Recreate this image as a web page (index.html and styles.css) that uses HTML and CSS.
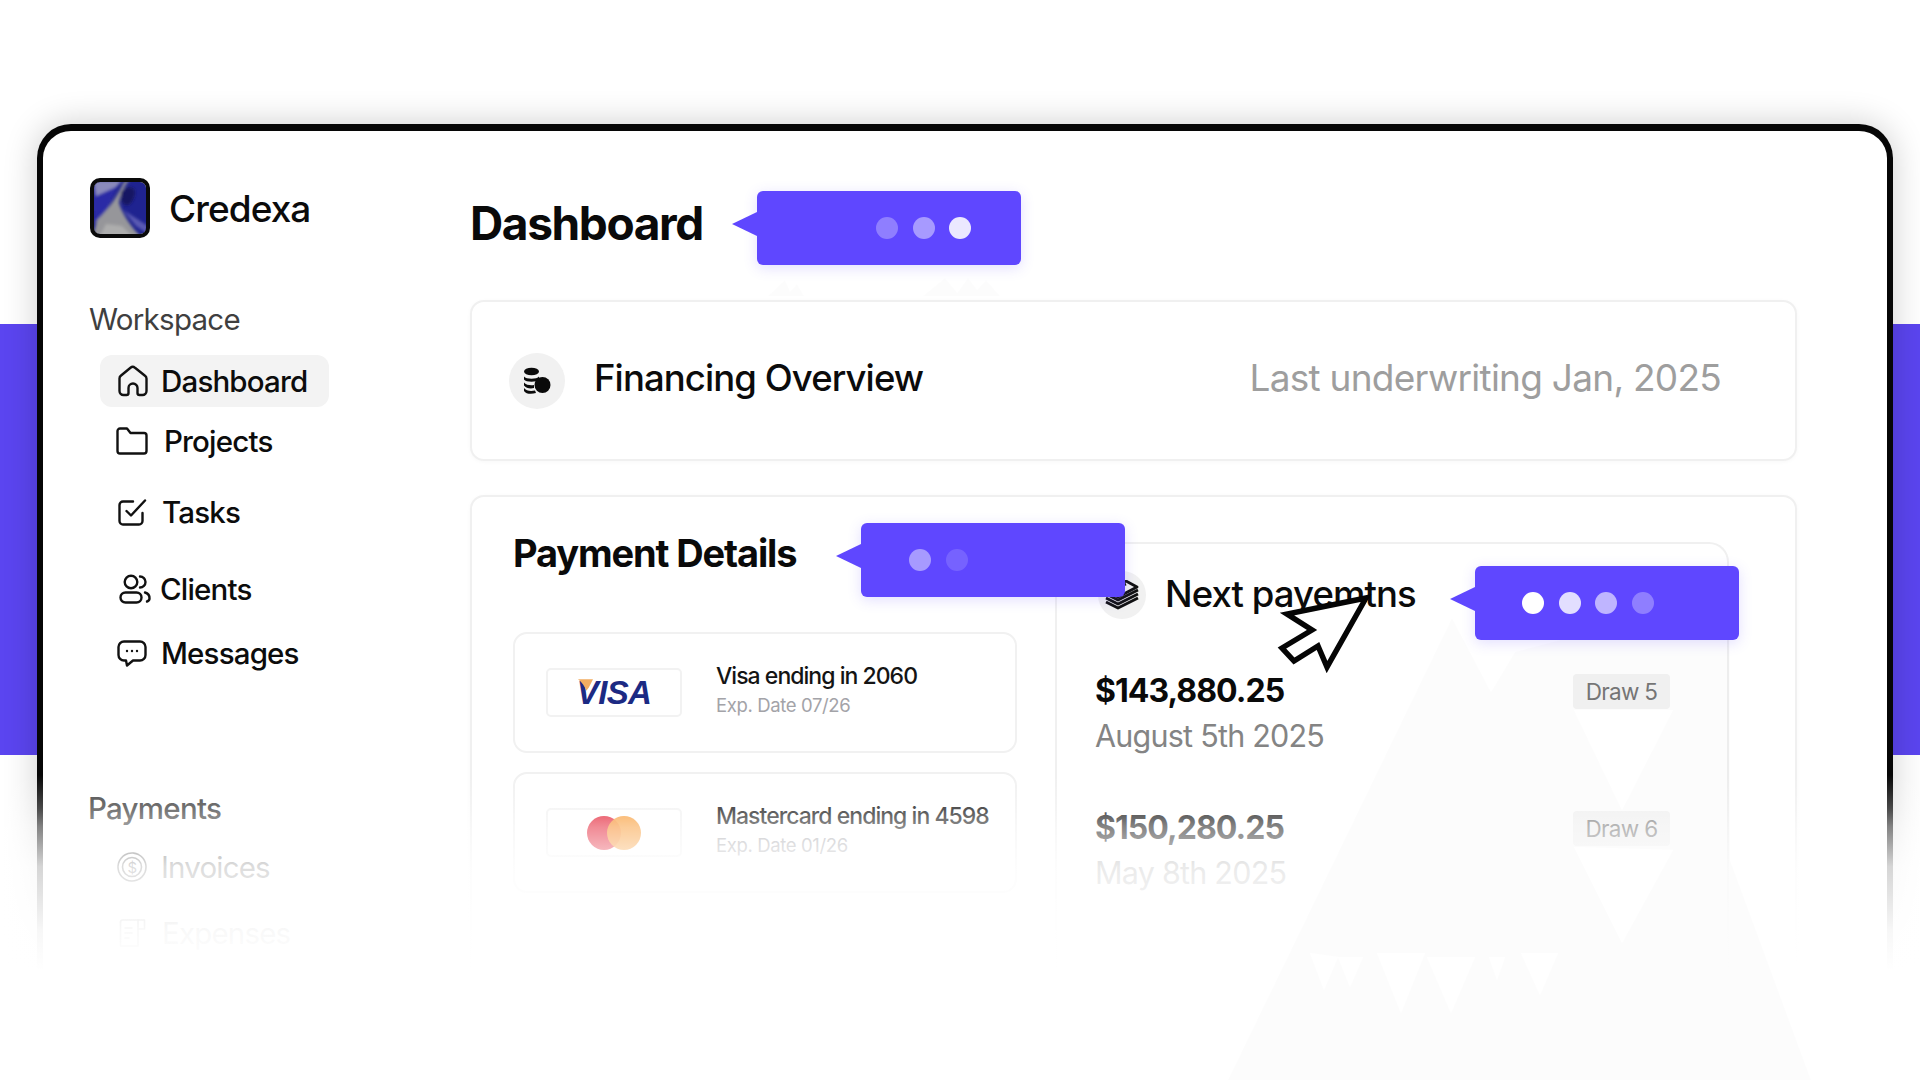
FILE: index.html
```html
<!DOCTYPE html>
<html lang="en">
<head>
<meta charset="utf-8">
<title>Credexa</title>
<link rel="stylesheet" href="styles.css">
</head>
<body>
<div class="stage">
  <div class="band"></div>
  <div class="window">
    <aside class="sidebar">
      <div class="brand">
        <svg class="logo" viewBox="0 0 60 60">
          <defs>
            <clipPath id="lc"><rect x="4" y="4" width="52" height="52" rx="6"/></clipPath>
            <filter id="lb"><feGaussianBlur stdDeviation="1.5"/></filter>
          </defs>
          <g clip-path="url(#lc)">
            <rect width="60" height="60" fill="#1f2390"/>
            <g filter="url(#lb)">
              <path d="M2 2H30L24 16 17 32 4 46Z" fill="#2a2aa6"/>
              <path d="M4 3H32L26 9 6 18Z" fill="#8a8abc"/>
              <path d="M34 4C28 16 22 28 7 42L2 62H54C42 50 33 38 29 25 30 16 34 8 40 2Z" fill="#96969a"/>
              <path d="M8 62L16 46 32 48 46 62Z" fill="#adadad"/>
              <path d="M31 14C38 6 50 8 43 22 39 30 33 28 31 22Z" fill="#141663"/>
              <path d="M33 32L58 48V56L46 48Z" fill="#5a5ab2"/>
            </g>
          </g>
          <rect x="2" y="2" width="56" height="56" rx="8" fill="none" stroke="#0a0a0a" stroke-width="4"/>
        </svg>
        <span class="brand-name">Credexa</span>
      </div>

      <div class="group-label workspace">Workspace</div>
      <a class="nav-item active">
        <svg class="ico i-home" viewBox="0 0 32 32"><path d="M9 30H6.500A4 4 0 0 1 2.500 26V13.500A3.500 3.500 0 0 1 3.800 10.800L13.500 2.800A3.500 3.500 0 0 1 18 2.800L28 10.800A3.500 3.500 0 0 1 29.500 13.500V26A4 4 0 0 1 25.500 30H22.500A2 2 0 0 1 20.500 28V23A4.500 4.500 0 0 0 11.500 23V28A2 2 0 0 1 9.500 30Z"/></svg>
        <span>Dashboard</span>
      </a>
      <a class="nav-item projects">
        <svg class="ico i-folder" viewBox="0 0 32 28"><path d="M1.500 4A2.500 2.500 0 0 1 4 1.500H11L14.500 6H28A2.500 2.500 0 0 1 30.500 8.500V24A2.500 2.500 0 0 1 28 26.500H4A2.500 2.500 0 0 1 1.500 24Z"/></svg>
        <span>Projects</span>
      </a>
      <a class="nav-item tasks">
        <svg class="ico i-task" viewBox="0 0 29 27"><path d="M15 2.500H5A3.500 3.500 0 0 0 1.500 6V22A3.500 3.500 0 0 0 5 25.500H21A3.500 3.500 0 0 0 24.500 22V14"/><path d="M8.500 12L13 16.500 27 1.500"/></svg>
        <span>Tasks</span>
      </a>
      <a class="nav-item clients">
        <svg class="ico i-users" viewBox="0 0 32 30"><circle cx="12" cy="8" r="6.300"/><rect x="1.500" y="18.500" width="21" height="10" rx="5"/><path d="M21 2.500A5.500 5.500 0 0 1 21 13.500"/><path d="M26 18.500A6 6 0 0 1 30.500 24.500C30.500 26 29.500 27 28 27.500"/></svg>
        <span>Clients</span>
      </a>
      <a class="nav-item messages">
        <svg class="ico i-chat" viewBox="0 0 30 27"><path d="M7 1.500H23A5.500 5.500 0 0 1 28.500 7V15A5.500 5.500 0 0 1 23 20.500H16L10 25.500 9 20.500H7A5.500 5.500 0 0 1 1.500 15V7A5.500 5.500 0 0 1 7 1.500Z"/><circle class="dot-fill" cx="10" cy="11" r="1.200"/><circle class="dot-fill" cx="15" cy="11" r="1.200"/><circle class="dot-fill" cx="20" cy="11" r="1.200"/></svg>
        <span>Messages</span>
      </a>

      <div class="group-label payments">Payments</div>
      <a class="nav-item invoices">
        <svg class="ico i-coin" viewBox="0 0 30 30"><circle cx="15" cy="15" r="14" stroke-dasharray="5 .6"/><circle cx="15" cy="15" r="9.500"/><text x="15" y="20.500" class="coin-sign">$</text></svg>
        <span>Invoices</span>
      </a>
      <a class="nav-item expenses">
        <svg class="ico i-receipt" viewBox="0 0 27 28"><path d="M1.500 3A2 2 0 0 1 3.500 1H25.500V10H19"/><path d="M1.500 3V27H19V1"/><path d="M6 9H13M6 14H13M6 19H10"/></svg>
        <span>Expenses</span>
      </a>
    </aside>

    <main class="main">
      <h1 class="page-title">Dashboard</h1>

      <section class="card overview">
        <span class="circle large">
          <svg class="coins" viewBox="0 0 28 28"><ellipse cx="8.500" cy="4.500" rx="7.500" ry="3.800"/><path d="M1 9.500C3 12.500 14 12.500 16 9.500V12.500C14 15.500 3 15.500 1 12.500Z"/><path d="M1 15.500C3 18.500 9 18.500 11 18V21C7 22 3 21 1 18.500Z"/><path d="M1 21C3 24 8 24.500 12 23.500L13 26C8 27.500 3 27 1 24Z"/><circle cx="19.500" cy="18" r="8"/></svg>
        </span>
        <h2 class="section-title lifted">Financing Overview</h2>
        <span class="underwriting">Last underwriting Jan, 2025</span>
      </section>

      <section class="card details">
        <div class="pay-col">
          <h2 class="pay-title">Payment Details</h2>
          <div class="pay-card visa">
            <div class="pay-logo">
              <span class="visa-mark"><svg class="visa-tick" viewBox="0 0 18 14"><path d="M0 0H18L13 10 10 14C8 8 5 4 0 0Z"/></svg>VISA</span>
            </div>
            <div class="pay-text">
              <div class="pay-name">Visa ending in 2060</div>
              <div class="pay-exp">Exp. Date 07/26</div>
            </div>
          </div>
          <div class="pay-card master">
            <div class="pay-logo">
              <span class="mc"><i class="mc-a"></i><i class="mc-b"></i></span>
            </div>
            <div class="pay-text">
              <div class="pay-name">Mastercard ending in 4598</div>
              <div class="pay-exp">Exp. Date 01/26</div>
            </div>
          </div>
        </div>

        <div class="next-panel">
          <div class="next-head">
            <span class="circle small">
              <svg class="cash" viewBox="0 0 36 30"><path d="M3 10L22 1 33 7 14 17Z"/><path d="M10 9L22 4M2 14L14 20 34 10M2 18L14 24 34 14M2 22L14 28 34 18"/></svg>
            </span>
            <h2 class="section-title">Next payemtns</h2>
          </div>
          <div class="draw first">
            <div>
              <div class="amount">$143,880.25</div>
              <div class="date">August 5th 2025</div>
            </div>
            <span class="badge">Draw 5</span>
          </div>
          <div class="draw second">
            <div>
              <div class="amount">$150,280.25</div>
              <div class="date">May 8th 2025</div>
            </div>
            <span class="badge">Draw 6</span>
          </div>
        </div>
      </section>
    </main>
  </div>

  <div class="fade"></div>

  <svg class="mountain" viewBox="0 0 1920 1080">
    <path fill-rule="evenodd" d="M1228 1080L1452 618 1491 692 1515 652 1560 640 1730 640 1730 860 1811 1080Z
      M1574 710L1622 810 1673 710Z M1574 847L1622 943 1673 850Z
      M1310 953L1324 990 1338 957Z M1338 957L1350 987 1363 957Z
      M1377 953L1401 1013 1425 953Z M1427 957L1451 1013 1475 957Z
      M1489 957L1497 980 1505 957Z M1521 953L1540 995 1558 953Z"/>
    <path d="M768 296L785 280 792 296ZM786 296L797 284 804 296ZM923 296L945 278 960 296ZM955 296L968 278 982 296ZM972 296L986 280 1000 296Z"/>
  </svg>

  <div class="bubble b-title">
    <i class="dot d40"></i><i class="dot d55"></i><i class="dot d90"></i>
  </div>
  <div class="bubble b-pay">
    <i class="dot d55"></i><i class="dot d20"></i>
  </div>
  <div class="bubble b-next">
    <i class="dot d100"></i><i class="dot d80"></i><i class="dot d60"></i><i class="dot d35"></i>
  </div>

  <svg class="cursor" viewBox="0 0 100 84"><path d="M91 8L12 24 37 40 7 58 19 71 43 56 52 77Z"/></svg>
</div>
</body>
</html>
```
FILE: styles.css
```css
* { box-sizing: border-box; }
html, body { margin: 0; padding: 0; background: #fff; }
body { font-family: Inter, "Noto Sans", sans-serif; color: #0b0b0b; }

.stage {
  position: relative;
  width: 1920px;
  height: 1080px;
  overflow: hidden;
  padding: 124px 27px 0 37px;
  background: #fff;
}
.band {
  position: absolute;
  left: 0; right: 0;
  top: 324px;
  height: 431px;
  background: #5b45f0;
}
.window {
  position: relative;
  display: flex;
  width: 1856px;
  height: 956px;
  padding-top: 47px;
  background: #fff;
  border: solid #060606;
  border-width: 7px 6px 0;
  border-radius: 34px 34px 0 0;
  box-shadow: 0 0 34px rgba(0,0,0,.2);
}

/* sidebar */
.sidebar { width: 427px; flex: none; padding-left: 47px; }
.brand { display: flex; align-items: center; gap: 19px; height: 60px; }
.logo { width: 60px; height: 60px; display: block; flex: none; }
.brand-name { font-size: 37px; font-weight: 500; letter-spacing: -.025em; }
.group-label { font-size: 29.500px; line-height: 36px; color: #3f3f3f; letter-spacing: -.025em; }
.workspace { margin-top: 63px; margin-left: -1px; }
.payments { margin-top: 117px; margin-left: -2px; font-weight: 500; }

.nav-item {
  display: flex;
  align-items: center;
  height: 40px;
  margin-left: 10px;
  padding-left: 17px;
  gap: 12px;
  font-size: 29.500px;
  font-weight: 500;
  letter-spacing: -.028em;
  color: #0c0c0c;
}
.nav-item.active {
  width: 229px;
  height: 52px;
  margin-top: 18px;
  background: #f3f3f3;
  border-radius: 12px;
}
.ico { display: block; flex: none; fill: none; stroke: #111; stroke-width: 2.400; stroke-linecap: round; stroke-linejoin: round; }
.i-home { width: 32px; height: 32px; }
.i-folder { width: 32px; height: 28px; }
.i-task { width: 29px; height: 27px; }
.i-users { width: 32px; height: 30px; }
.i-chat { width: 30px; height: 27px; }
.i-coin { width: 30px; height: 30px; stroke: #333; stroke-width: 1.600; }
.i-receipt { width: 27px; height: 28px; stroke: #333; stroke-width: 1.600; }
.dot-fill { fill: #111; stroke: none; }
.coin-sign { font-size: 15px; text-anchor: middle; fill: #333; stroke: none; font-family: Inter, sans-serif; }

.projects { margin-top: 14px; padding-left: 16px; gap: 16px; }
.tasks { margin-top: 31px; padding-left: 18px; gap: 15px; }
.clients { margin-top: 37px; padding-left: 19px; gap: 9px; }
.messages { margin-top: 24px; padding-left: 17px; gap: 14px; }
.invoices { margin-top: 21px; gap: 14px; font-weight: 400; color: #333; }
.expenses { margin-top: 26px; padding-left: 19px; gap: 16px; font-weight: 400; color: #333; }

/* main */
.main { flex: none; width: 1327px; display: flex; flex-direction: column; padding-top: 20px; }
.page-title { margin: 0 0 52px; font-size: 46px; line-height: 50px; font-weight: 700; letter-spacing: -.03em; color: #0a0a0a; height: 50px; }
.card {
  background: #fff;
  border: 2px solid #f0f0f0;
  border-radius: 14px;
  box-shadow: 0 1px 4px rgba(0,0,0,.03);
}
.overview {
  display: flex;
  align-items: center;
  height: 161px;
  padding: 0 74px 0 37px;
}
.circle { display: flex; align-items: center; justify-content: center; flex: none; border-radius: 50%; background: #f1f1f1; }
.circle.large { width: 56px; height: 56px; margin-right: 29px; }
.circle.small { width: 48px; height: 48px; margin-left: 3px; margin-right: 19px; }
.coins { width: 28px; height: 28px; fill: #0a0a0a; }
.cash { width: 36px; height: 30px; fill: none; stroke: #111; stroke-width: 2.800; stroke-linejoin: round; }
.section-title { margin: 0; font-size: 36.500px; font-weight: 500; letter-spacing: -.025em; line-height: 44px; color: #0b0b0b; }
.section-title.lifted { position: relative; top: -3px; }
.underwriting { margin-left: auto; position: relative; top: -3px; font-size: 37px; color: #9e9e9e; letter-spacing: -.02em; }

.details { display: flex; flex: 1; margin-top: 34px; margin-bottom: 30px; }
.pay-col { width: 583px; flex: none; padding: 34px 0 0 41px; }
.pay-title { margin: 0 0 57px; font-size: 38px; line-height: 44px; font-weight: 700; letter-spacing: -.03em; color: #0a0a0a; }
.pay-card {
  display: flex;
  align-items: center;
  width: 504px;
  height: 121px;
  padding-left: 31px;
  border: 2px solid #f1f1f1;
  border-radius: 14px;
}
.pay-card.master { margin-top: 19px; }
.pay-logo {
  display: flex;
  align-items: center;
  justify-content: center;
  width: 136px;
  height: 49px;
  margin-right: 34px;
  border: 2px solid #f2f2f2;
  border-radius: 5px;
}
.visa-mark {
  position: relative;
  font-family: "Liberation Sans", sans-serif;
  font-size: 33px;
  line-height: 34px;
  font-weight: 700;
  font-style: italic;
  letter-spacing: -.02em;
  color: #1c2a83;
}
.visa-tick { position: absolute; left: 1px; top: 3px; width: 15px; height: 12px; fill: #f2ad62; }
.mc { display: flex; }
.mc i { display: block; width: 34px; height: 34px; border-radius: 50%; }
.mc-a { background: #e2152a; }
.mc-b { background: #f79020; margin-left: -14px; opacity: .92; }
.pay-text { margin-top: -7px; }
.pay-name { font-size: 23px; line-height: 30px; font-weight: 500; letter-spacing: -.042em; color: #141414; }
.pay-exp { font-size: 18.500px; line-height: 24px; margin-top: 2px; letter-spacing: -.02em; color: #a3a3a8; }

.next-panel {
  width: 674px;
  flex: none;
  margin: 45px 0 0 0;
  padding: 27px 57px 0 38px;
  border: solid #f0f0f0;
  border-width: 2px 2px 0;
  border-radius: 20px 20px 0 0;
}
.next-head { display: flex; align-items: center; height: 48px; margin-bottom: 52px; }
.next-head .section-title { position: relative; top: -1px; }
.draw { display: flex; justify-content: space-between; align-items: flex-start; }
.draw.second { margin-top: 54px; }
.amount { font-size: 32px; line-height: 40px; font-weight: 700; letter-spacing: -.03em; color: #0a0a0a; }
.date { font-size: 30.500px; line-height: 36px; margin-top: 7px; letter-spacing: -.025em; color: #848484; }
.badge {
  display: block;
  width: 97px;
  height: 35px;
  margin-top: 3px;
  text-align: center;
  font-size: 22.500px;
  line-height: 35px;
  letter-spacing: -.03em;
  color: #777;
  background: #f3f3f3;
  border-radius: 4px;
}

/* overlays */
.fade {
  position: absolute;
  left: 0; right: 0;
  top: 775px;
  height: 305px;
  background: linear-gradient(to bottom,
    rgba(255,255,255,0) 0%,
    rgba(255,255,255,.27) 11%,
    rgba(255,255,255,.5) 17%,
    rgba(255,255,255,.83) 30%,
    rgba(255,255,255,.97) 51%,
    #fff 64%,
    #fff 100%);
}
.mountain { position: absolute; left: 0; top: 0; width: 1920px; height: 1080px; fill: rgba(0,0,0,.011); }

.bubble {
  position: absolute;
  display: flex;
  align-items: center;
  gap: 14.500px;
  width: 264px;
  height: 74px;
  background: #5f47ff;
  border-radius: 6px;
  box-shadow: 0 3px 14px rgba(95,71,255,.18);
}
.bubble::before {
  content: "";
  position: absolute;
  left: -25px;
  top: 21px;
  border-style: solid;
  border-width: 12px 25px 12px 0;
  border-color: transparent #5f47ff transparent transparent;
}
.b-title { left: 757px; top: 191px; padding-left: 119px; }
.b-pay { left: 861px; top: 523px; padding-left: 48px; }
.b-next { left: 1475px; top: 566px; padding-left: 47px; }
.dot { display: block; width: 22px; height: 22px; border-radius: 50%; background: #fff; }
.d20 { opacity: .15; }
.d35 { opacity: .3; }
.d40 { opacity: .3; }
.d55 { opacity: .45; }
.d60 { opacity: .6; }
.d80 { opacity: .82; }
.d90 { opacity: .88; }
.d100 { opacity: 1; }

.cursor {
  position: absolute;
  left: 1275px;
  top: 590px;
  width: 100px;
  height: 84px;
  fill: #fff;
  stroke: #050505;
  stroke-width: 5.500;
  stroke-linejoin: miter;
}
```
